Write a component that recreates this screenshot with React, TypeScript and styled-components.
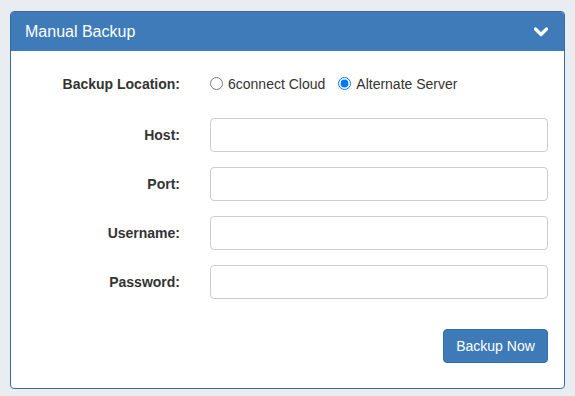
import React from "react";
import styled, { createGlobalStyle } from "styled-components";

const Global = createGlobalStyle`
  html, body { margin: 0; padding: 0; background: #e9ecf0; }
  body { font-family: "Liberation Sans", Arial, sans-serif; color: #333; }
  * { box-sizing: border-box; }
`;

const Page = styled.div`
  padding: 11px 10px 0 10px;
  width: 575px;
  height: 396px;
`;

const Panel = styled.section`
  width: 555px;
  border: 1px solid #3b6c9d;
  border-radius: 4px;
  background: #fff;
  overflow: hidden;
`;

const Header = styled.header`
  height: 39px;
  background: #3e7bb8;
  display: flex;
  align-items: center;
  justify-content: space-between;
  padding: 0 16px 0 14px;
  color: #fff;
`;

const Title = styled.h3`
  margin: 0;
  font-size: 16px;
  font-weight: normal;
`;

const Body = styled.div`
  padding: 13px 16px 25px 0;
`;

const Form = styled.div`
  display: grid;
  grid-template-columns: 169px 338px;
  column-gap: 30px;
  row-gap: 15px;
  align-items: center;
`;

const Label = styled.label<{ $tall?: boolean }>`
  text-align: right;
  font-weight: bold;
  font-size: 14px;
  color: #333;
  line-height: ${(p) => (p.$tall ? "38px" : "34px")};
`;

const Radios = styled.div`
  display: flex;
  align-items: center;
  height: 39px;
  font-size: 14px;
  color: #333;
`;

const RadioOption = styled.label`
  display: inline-flex;
  align-items: center;
  margin-right: 13px;
  input {
    margin: 0 5px 0 0;
    width: 13px;
    height: 13px;
  }
`;

const Input = styled.input`
  width: 338px;
  height: 34px;
  border: 1px solid #ccc;
  border-radius: 4px;
  padding: 6px 12px;
  font-size: 14px;
  font-family: inherit;
  outline: none;
`;

const Actions = styled.div`
  display: flex;
  justify-content: flex-end;
  margin-top: 30px;
`;

const Button = styled.button`
  height: 34px;
  width: 105px;
  background: #3d7ab7;
  border: 1px solid #356ea8;
  border-radius: 4px;
  color: #fff;
  font-family: inherit;
  font-size: 14px;
  padding: 0;
`;

const Chevron = () => (
  <svg width="14" height="11" viewBox="0 0 14 11">
    <path d="M1.5 3 L7 8.5 L12.5 3" fill="none" stroke="#fff" strokeWidth="3.2" strokeLinecap="round" strokeLinejoin="round" />
  </svg>
);

const fields = ["Host", "Port", "Username", "Password"];

export default function App() {
  return (
    <>
      <Global />
      <Page>
        <Panel>
          <Header>
            <Title>Manual Backup</Title>
            <Chevron />
          </Header>
          <Body>
            <Form>
              <Label $tall>Backup Location:</Label>
              <Radios>
                <RadioOption>
                  <input type="radio" name="loc" />
                  6connect Cloud
                </RadioOption>
                <RadioOption>
                  <input type="radio" name="loc" defaultChecked />
                  Alternate Server
                </RadioOption>
              </Radios>
              {fields.map((f) => (
                <React.Fragment key={f}>
                  <Label>{f}:</Label>
                  <Input type={f === "Password" ? "password" : "text"} />
                </React.Fragment>
              ))}
            </Form>
            <Actions>
              <Button>Backup Now</Button>
            </Actions>
          </Body>
        </Panel>
      </Page>
    </>
  );
}
